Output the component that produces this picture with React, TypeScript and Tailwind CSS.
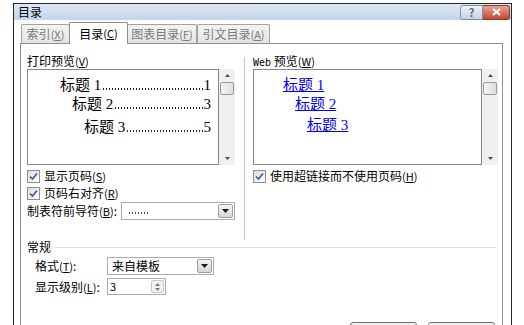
import React from "react";

const ui = { fontFamily: '"Noto Sans CJK SC", "Liberation Sans", sans-serif' };
const serif = { fontFamily: '"Liberation Serif", "Noto Sans CJK SC", serif' };

function Key({ k }: { k: string }) {
	return (
		<span className="text-[11px]">
			(<span className="underline">{k}</span>)
		</span>
	);
}

function Check({ label, k, checked = true }: { label: string; k: string; checked?: boolean }) {
	return (
		<div className="flex h-[14px] items-center gap-[4px]">
			<div className="flex h-[13px] w-[13px] items-center justify-center border border-[#8f8f8f] bg-gradient-to-br from-[#dcdcdc] to-[#ffffff]">
				{checked && (
					<svg width="9" height="9" viewBox="0 0 9 9">
						<path d="M1 4.5 L3.5 7 L8 1.5" fill="none" stroke="#3d56a0" strokeWidth="1.6" />
					</svg>
				)}
			</div>
			<span className="leading-[14px]">
				{label}
				<Key k={k} />
			</span>
		</div>
	);
}

function DropButton() {
	return (
		<div className="m-[1px] flex w-[15px] items-center justify-center rounded-[2px] border border-[#a0a0a0] bg-gradient-to-b from-[#f4f4f4] to-[#d6d6d6]">
			<svg width="7" height="4" viewBox="0 0 7 4">
				<path d="M0 0 H7 L3.5 4 Z" fill="#1a1a1a" />
			</svg>
		</div>
	);
}

function ScrollBar() {
	return (
		<div className="flex w-[16px] shrink-0 flex-col items-center bg-[#f0f0f0]">
			<svg className="mt-[5px]" width="5" height="3" viewBox="0 0 5 3">
				<path d="M0 3 L2.5 0 L5 3 Z" fill="#505050" />
			</svg>
			<div className="mt-[5px] h-[13px] w-[14px] rounded-[2px] border border-[#9a9a9a] bg-gradient-to-r from-[#f4f4f4] to-[#dedede]" />
			<div className="flex-1" />
			<svg className="mb-[5px]" width="5" height="3" viewBox="0 0 5 3">
				<path d="M0 0 L5 0 L2.5 3 Z" fill="#505050" />
			</svg>
		</div>
	);
}

// dot leader drawn as a repeating dot pattern
function Leader() {
	return (
		<span className="mx-[1px] mb-[3px] h-[2px] min-w-0 flex-1 bg-[radial-gradient(circle,#222_0.7px,transparent_1px)] bg-[length:3px_2px] bg-repeat-x" />
	);
}

function TocRow({ title, num, indent, mt }: { title: string; num: string; indent: string; mt: string }) {
	return (
		<div className={`flex h-[16px] min-w-0 items-end text-[15px] leading-[16px] ${indent} ${mt}`} style={serif}>
			<span className="whitespace-nowrap">{title}</span>
			<Leader />
			<span>{num}</span>
		</div>
	);
}

function Tab({ label, k, w, active }: { label: string; k: string; w: string; active?: boolean }) {
	if (active) {
		return (
			<div
				className={`relative z-10 -mx-[1px] mb-[-1px] flex h-[22px] ${w} items-center justify-center rounded-t-[2px] border border-b-0 border-[#8e8f8f] bg-white text-black`}
			>
				{label}
				<Key k={k} />
			</div>
		);
	}
	return (
		<div
			className={`flex h-[19px] ${w} items-center justify-center rounded-t-[2px] border border-b-0 border-[#a3a3a3] bg-gradient-to-b from-[#f3f3f3] to-[#e3e3e3] text-[#7a7a7a]`}
		>
			{label}
			<Key k={k} />
		</div>
	);
}

export default function App() {
	return (
		<div className="h-[325px] w-[524px] overflow-hidden bg-white pl-[13px] pt-[3px] text-[12px] text-black" style={ui}>
			<div className="flex h-[340px] w-[499px] flex-col border-x border-t border-[#1e2a30] bg-white">
				<div className="flex h-[20px] items-center bg-gradient-to-b from-[#dde8f5] to-[#c3d4eb] pl-[4px] pr-[1px]">
					<span className="text-[12px] leading-none">目录</span>
					<div className="flex-1" />
					<div className="flex h-[15px] w-[23px] items-center justify-center rounded-l-[3px] border border-[#7f8fa3] bg-gradient-to-b from-[#eef3f9] to-[#c6d3e3] text-[11px] font-bold leading-none text-[#5d6c80]">
						?
					</div>
					<div className="flex h-[15px] w-[27px] items-center justify-center rounded-r-[3px] border border-l-0 border-[#8a3a30] bg-gradient-to-b from-[#e8a493] to-[#c2452f]">
						<svg width="9" height="8" viewBox="0 0 9 8">
							<path d="M1 1 L8 7 M8 1 L1 7" stroke="white" strokeWidth="2" />
						</svg>
					</div>
				</div>

				<div className="pl-[6px] pr-[8px] pt-[2px]">
					<div className="flex h-[21px] items-end pl-[1px]">
						<Tab label="索引" k="X" w="w-[49px]" />
						<Tab label="目录" k="C" w="w-[59px]" active />
						<Tab label="图表目录" k="F" w="w-[70px]" />
						<Tab label="引文目录" k="A" w="w-[73px]" />
					</div>

					<div className="h-[300px] border border-[#8e8f8f] bg-white px-[6px] pt-[11px]">
						<div className="flex h-[185px]">
							<div className="w-[208px] min-w-0 shrink-0">
								<div className="h-[12px] leading-[12px]">
									打印预览
									<Key k="V" />
								</div>
								<div className="mt-[2px] flex h-[96px]">
									<div className="min-w-0 flex-1 overflow-hidden border border-[#828790] bg-white pr-[7px]">
										<TocRow title="标题 1" num="1" indent="pl-[32px]" mt="mt-[7px]" />
										<TocRow title="标题 2" num="3" indent="pl-[44px]" mt="mt-[3px]" />
										<TocRow title="标题 3" num="5" indent="pl-[56px]" mt="mt-[7px]" />
									</div>
									<ScrollBar />
								</div>
								<div className="mt-[4px]">
									<Check label="显示页码" k="S" />
								</div>
								<div className="mt-[3px]">
									<Check label="页码右对齐" k="R" />
								</div>
								<div className="mt-[2px] flex h-[18px] items-center">
									<span className="w-[94px] whitespace-nowrap">
										制表符前导符
										<Key k="B" />:
									</span>
									<div className="flex h-[18px] flex-1 border border-[#abadb3] bg-white">
										<div className="flex flex-1 items-center pl-[6px]">
											<span className="mt-[3px] h-[2px] w-[21px] bg-[radial-gradient(circle,#444_0.7px,transparent_1px)] bg-[length:3px_2px] bg-repeat-x" />
										</div>
										<DropButton />
									</div>
								</div>
							</div>

							<div className="ml-[9px] mr-[8px] mt-[2px] w-px shrink-0 bg-[#c8c8c8]" />

							<div className="w-[245px] min-w-0 shrink-0">
								<div className="h-[12px] leading-[12px]">
									<span style={{ fontFamily: '"DejaVu Sans Mono", monospace' }} className="text-[10px]">
										Web
									</span>{" "}
									预览
									<Key k="W" />
								</div>
								<div className="mt-[2px] flex h-[96px]">
									<div className="min-w-0 flex-1 border border-[#828790] bg-white text-[15px] leading-[16px] text-[#0000ee]" style={serif}>
										<div className="mt-[7px] pl-[29px]">
											<span className="underline">标题 1</span>
										</div>
										<div className="mt-[3px] pl-[41px]">
											<span className="underline">标题 2</span>
										</div>
										<div className="mt-[5px] pl-[53px]">
											<span className="underline">标题 3</span>
										</div>
									</div>
									<ScrollBar />
								</div>
								<div className="mt-[4px]">
									<Check label="使用超链接而不使用页码" k="H" />
								</div>
							</div>
						</div>

						<div className="flex h-[14px] items-center">
							<span className="leading-[14px]">常规</span>
							<div className="ml-[4px] h-px flex-1 bg-[#dcdcdc]" />
						</div>
						<div className="mt-[3px] flex h-[18px] items-center pl-[8px]">
							<span className="w-[72px]">
								格式
								<Key k="T" />:
							</span>
							<div className="flex h-[18px] w-[107px] border border-[#abadb3] bg-white">
								<span className="flex-1 pl-[4px] leading-[16px]">来自模板</span>
								<DropButton />
							</div>
						</div>
						<div className="mt-[3px] flex h-[17px] items-center pl-[8px]">
							<span className="w-[72px] whitespace-nowrap">
								显示级别
								<Key k="L" />:
							</span>
							<div className="flex h-[17px] w-[59px] border border-[#abadb3] bg-white">
								<span className="flex-1 pl-[2px] text-[11px] leading-[15px]">3</span>
								<div className="m-[1px] flex w-[13px] flex-col items-center justify-center gap-[2px] rounded-[2px] border border-[#c8c8c8] bg-[#f2f2f2]">
									<svg width="5" height="3" viewBox="0 0 5 3">
										<path d="M0 3 L2.5 0 L5 3 Z" fill="#7a7a7a" />
									</svg>
									<svg width="5" height="3" viewBox="0 0 5 3">
										<path d="M0 0 L5 0 L2.5 3 Z" fill="#7a7a7a" />
									</svg>
								</div>
							</div>
						</div>

						<div className="mt-[27px] flex justify-end gap-[11px] pr-[1px]">
							<div className="h-[22px] w-[67px] rounded-[3px] border border-[#707070] bg-gradient-to-b from-[#f2f2f2] to-[#dddddd]" />
							<div className="h-[22px] w-[67px] rounded-[3px] border border-[#707070] bg-gradient-to-b from-[#f2f2f2] to-[#dddddd]" />
						</div>
					</div>
				</div>
			</div>
		</div>
	);
}
